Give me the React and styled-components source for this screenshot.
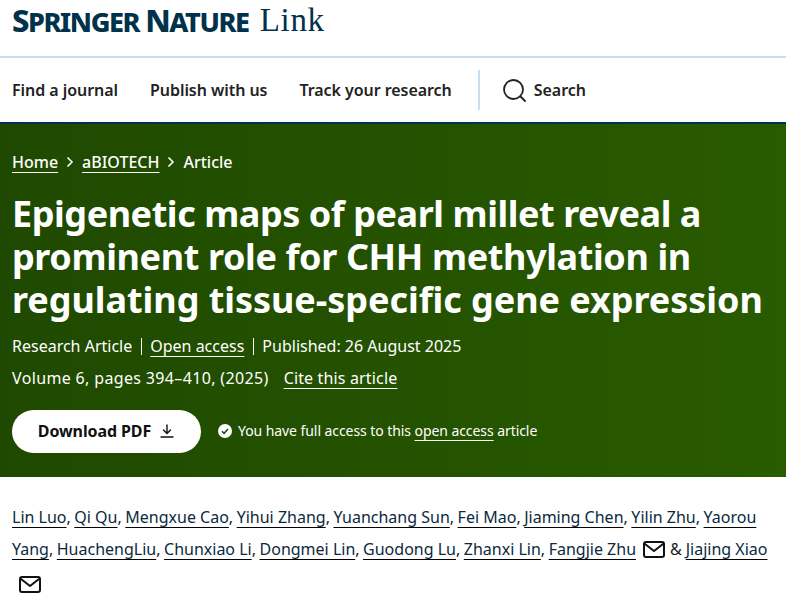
import React from "react";
import styled, { createGlobalStyle } from "styled-components";

const Global = createGlobalStyle`
  html, body { margin: 0; padding: 0; background: #fff; }
  body { font-family: "Noto Sans", "Open Sans", sans-serif; overflow: hidden; height: 601px; }
`;
const Page = styled.div`width: 786px;`;
const Header = styled.header`
  height: 56px; border-bottom: 2px solid #c5e0f4; padding: 0 12px; display: flex; align-items: flex-start; gap: 11px;
`;
const Brand = styled.div`
  color: #01324b; font-family: "Noto Sans", sans-serif; font-weight: 800; display: flex; align-items: baseline; height: 40px;
  line-height: 40px; white-space: nowrap; letter-spacing: -1.4px;
`;
const BrandCap = styled.span`font-size: 31px;`;
const BrandSmall = styled.span`font-size: 27px; margin-right: ${p => p.$gap || 0}px;`;
const BrandLink = styled.div`
  color: #01324b; font: 400 33px/1 "Liberation Serif", serif; margin-top: 4px; letter-spacing: 0.7px;
`;
const Nav = styled.nav`
  height: 64px; border-bottom: 2px solid #01324b; padding: 0 12px; display: flex; align-items: center;
  box-sizing: content-box;
`;
const NavItem = styled.a`
  color: #222; font-size: 16px; font-weight: 600; letter-spacing: -0.05px; margin-right: 32px; white-space: nowrap;
`;
const NavSearch = styled.div`
  border-left: 2px solid #c5e0f4; height: 40px; padding-left: 22px; margin-left: -6px;
  display: flex; align-items: center; gap: 8px; color: #222; font-size: 16px; font-weight: 600; letter-spacing: -0.05px;
`;
const Hero = styled.section`
  height: 353px; box-sizing: border-box; padding: 26px 12px 0; color: #fff;
  background: linear-gradient(90deg, #1f4900 0%, #295b00 100%);
`;
const Crumbs = styled.div`
  display: flex; align-items: center; gap: 8px; font-size: 16px; font-weight: 500; line-height: 24px; letter-spacing: 0;
`;
const HeroLink = styled.a`
  color: #fff; text-decoration: underline; text-underline-offset: 4px; text-decoration-thickness: 1px;
  margin-left: ${p => p.$left || 0}px;
  ${p => p.$spacing !== undefined && `letter-spacing: ${p.$spacing}px;`}
`;
const Title = styled.h1`
  margin: 18px 0 0; font-size: 36px; font-weight: 700; white-space: nowrap;
`;
const TitleLine = styled.span`
  display: block; line-height: 43px; letter-spacing: ${p => p.$spacing}px;
`;
const Meta = styled.div`
  display: flex; align-items: center; font-size: 16px; line-height: 24px; color: #fff;
  letter-spacing: ${p => p.$spacing || 0}px; margin-top: ${p => p.$top}px; white-space: nowrap;
`;
const Sep = styled.span`
  width: 1px; height: 17px; background: #fff; margin: 0 8px 0 9px;
`;
const Actions = styled.div`
  display: flex; align-items: center; margin-top: 20px; gap: 16px;
`;
const Download = styled.a`
  width: 189px; height: 43px; box-sizing: border-box; padding-bottom: 2px; border-radius: 22px; background: #fff; color: #111;
  font-size: 16px; font-weight: 700; letter-spacing: -0.1px; display: flex; align-items: center; justify-content: center; gap: 8px;
`;
const Access = styled.div`
  display: flex; align-items: center; gap: 5px; font-size: 14px; letter-spacing: -0.07px; white-space: nowrap; padding-bottom: 2px;
`;
const Authors = styled.div`
  padding: 24px 12px 0; font-size: 16px; line-height: 32px; color: #222;
`;
const AuthorLine = styled.div`
  display: flex; align-items: center; white-space: nowrap; height: ${p => p.$h || 32}px; margin-left: ${p => p.$left || 0}px;
`;
const Author = styled.a`
  color: #0c2a3d; text-decoration: underline; text-decoration-color: #000; text-underline-offset: 4px; text-decoration-thickness: 1px;
`;
const Comma = styled.span`margin-right: 3.5px;`;
const MailSlot = styled.span`display: flex; margin: 0 4px 0 6px;`;
const Amp = styled.span`margin-right: 4px;`;

const Mail = () => (
  <svg width="24" height="24" viewBox="0 0 24 24" fill="none" stroke="#111" strokeWidth="2" strokeLinejoin="round" strokeLinecap="round">
    <rect x="2" y="5" width="20" height="15" rx="2" />
    <path d="M3 7l9 7 9-7" />
  </svg>
);
const Chevron = () => (
  <svg width="8" height="12" viewBox="0 0 8 12" fill="none" stroke="#fff" strokeWidth="1.6"><path d="M1.5 1.5L6 6l-4.500 4.500" /></svg>
);

const line1 = ["Lin Luo","Qi Qu","Mengxue Cao","Yihui Zhang","Yuanchang Sun","Fei Mao","Jiaming Chen","Yilin Zhu"];
const line2 = ["Yang","HuachengLiu","Chunxiao Li","Dongmei Lin","Guodong Lu","Zhanxi Lin"];

export default function App() {
  return (
    <Page>
      <Global />
      <Header>
        <Brand>
          <BrandCap>S</BrandCap><BrandSmall $gap={6}>PRINGER</BrandSmall>
          <BrandCap>N</BrandCap><BrandSmall>ATURE</BrandSmall>
        </Brand>
        <BrandLink>Link</BrandLink>
      </Header>
      <Nav>
        <NavItem>Find a journal</NavItem>
        <NavItem>Publish with us</NavItem>
        <NavItem>Track your research</NavItem>
        <NavSearch>
          <svg width="24" height="24" viewBox="0 0 24 24" fill="none" stroke="#222" strokeWidth="1.8" strokeLinecap="round">
            <circle cx="11.5" cy="11.5" r="9.5" />
            <path d="M18.5 18.5L23 23" />
          </svg>
          Search
        </NavSearch>
      </Nav>
      <Hero>
        <Crumbs>
          <HeroLink>Home</HeroLink>
          <Chevron />
          <HeroLink>aBIOTECH</HeroLink>
          <Chevron />
          <span>Article</span>
        </Crumbs>
        <Title>
          <TitleLine $spacing={-0.45}>Epigenetic maps of pearl millet reveal a</TitleLine>
          <TitleLine $spacing={-0.38}>prominent role for CHH methylation in</TitleLine>
          <TitleLine $spacing={-0.05}>regulating tissue-specific gene expression</TitleLine>
        </Title>
        <Meta $top={13}>
          Research Article<Sep /><HeroLink>Open access</HeroLink><Sep />Published: 26 August 2025
        </Meta>
        <Meta $top={8} $spacing={0.35}>
          Volume 6, pages 394–410, (2025)<HeroLink $left={15} $spacing={0.15}>Cite this article</HeroLink>
        </Meta>
        <Actions>
          <Download>
            Download PDF
            <svg width="16" height="16" viewBox="0 0 16 16" fill="none" stroke="#111" strokeWidth="1.4" strokeLinecap="round" strokeLinejoin="round">
              <path d="M8 2v8M4.500 7L8 10.500 11.500 7M2 14h12" />
            </svg>
          </Download>
          <Access>
            <svg width="16" height="16" viewBox="0 0 16 16">
              <circle cx="8" cy="8" r="7" fill="#fff" />
              <path d="M5 8.200l2.100 2.100L11 6" fill="none" stroke="#1f4900" strokeWidth="1.500" />
            </svg>
            <span>You have full access to this <HeroLink>open access</HeroLink> article</span>
          </Access>
        </Actions>
      </Hero>
      <Authors>
        <AuthorLine>
          {line1.map(a => <React.Fragment key={a}><Author>{a}</Author><Comma>,</Comma></React.Fragment>)}
          <Author>Yaorou</Author>
        </AuthorLine>
        <AuthorLine>
          {line2.map(a => <React.Fragment key={a}><Author>{a}</Author><Comma>,</Comma></React.Fragment>)}
          <Author>Fangjie Zhu</Author>
          <MailSlot><Mail /></MailSlot>
          <Amp>&amp;</Amp>
          <Author>Jiajing Xiao</Author>
        </AuthorLine>
        <AuthorLine $h={38} $left={6}><Mail /></AuthorLine>
      </Authors>
    </Page>
  );
}
